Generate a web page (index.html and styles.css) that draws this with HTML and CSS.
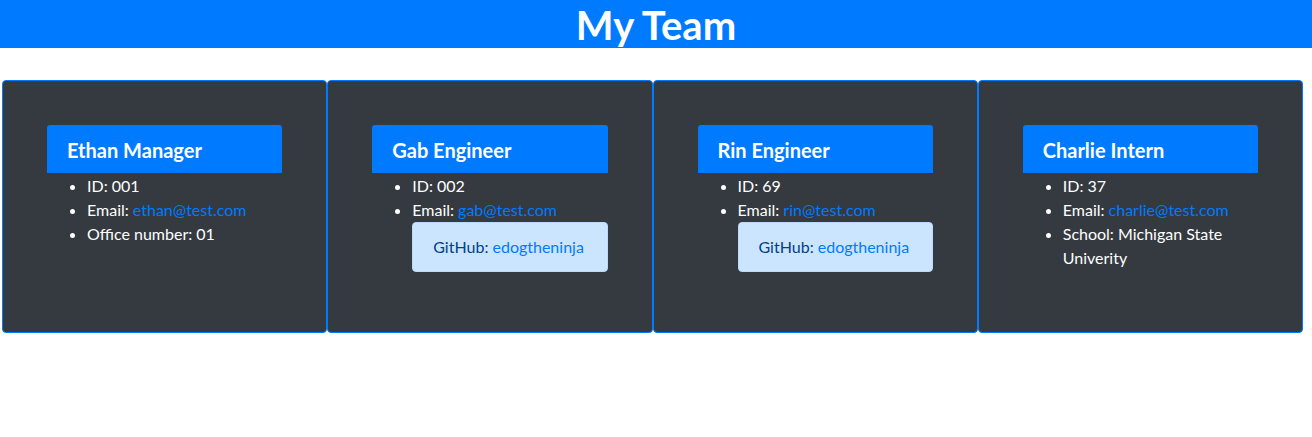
FILE: index.html
```html
<!DOCTYPE html>
<html lang="en">
<head>
<meta charset="utf-8">
<title>My Team</title>
<link rel="stylesheet" href="styles.css">
</head>
<body>
<header class="banner">
  <h1 class="banner-title">My Team</h1>
</header>
<main class="team">
  <section class="card">
    <div class="member">
      <h2 class="member-name">Ethan Manager</h2>
      <ul class="details">
        <li>ID: 001</li>
        <li>Email: <a class="link" href="#">ethan@test.com</a></li>
        <li>Office number: 01</li>
      </ul>
    </div>
  </section>
  <section class="card">
    <div class="member">
      <h2 class="member-name">Gab Engineer</h2>
      <ul class="details">
        <li>ID: 002</li>
        <li>Email: <a class="link" href="#">gab@test.com</a></li>
        <li class="github">GitHub: <a class="link" href="#">edogtheninja</a></li>
      </ul>
    </div>
  </section>
  <section class="card">
    <div class="member">
      <h2 class="member-name">Rin Engineer</h2>
      <ul class="details">
        <li>ID: 69</li>
        <li>Email: <a class="link" href="#">rin@test.com</a></li>
        <li class="github">GitHub: <a class="link" href="#">edogtheninja</a></li>
      </ul>
    </div>
  </section>
  <section class="card">
    <div class="member">
      <h2 class="member-name">Charlie Intern</h2>
      <ul class="details">
        <li>ID: 37</li>
        <li>Email: <a class="link" href="#">charlie@test.com</a></li>
        <li>School: Michigan State Univerity</li>
      </ul>
    </div>
  </section>
</main>
</body>
</html>
```

FILE: styles.css
```css
* { box-sizing: border-box; }

body {
  margin: 0;
  font-family: Lato, "Liberation Sans", sans-serif;
  font-size: 16px;
  line-height: 1.5;
  color: #212529;
  background: #fff;
}

.banner {
  background: #007bff;
}

.banner-title {
  margin: 0;
  padding-top: 1px;
  height: 48px;
  color: #fff;
  text-align: center;
  font-size: 40px;
  line-height: 48px;
  font-weight: 700;
}

.team {
  display: flex;
  width: 1301px;
  margin: 32px 0 0 2px;
}

.card {
  flex: 1 1 0;
  background: #343a40;
  border: 1px solid #007bff;
  border-radius: 4px;
  padding: 44px;
  color: #fff;
}

.member-name {
  margin: 0;
  background: #007bff;
  color: #fff;
  font-size: 20px;
  line-height: 24px;
  font-weight: 700;
  padding: 13px 20px 11px;
  border-radius: 3px 3px 0 0;
}

.details {
  margin: 0 0 16px;
  padding: 1px 0 0 40px;
  list-style: disc;
}

.details li {
  line-height: 24px;
}

.link {
  color: #007bff;
  text-decoration: none;
}

.details .github {
  list-style: none;
  margin: 0 0 16px;
  padding: 12px 20px;
  background: #cce5ff;
  border: 1px solid #b8daff;
  border-radius: 4px;
  color: #004085;
  line-height: 24px;
}
```
